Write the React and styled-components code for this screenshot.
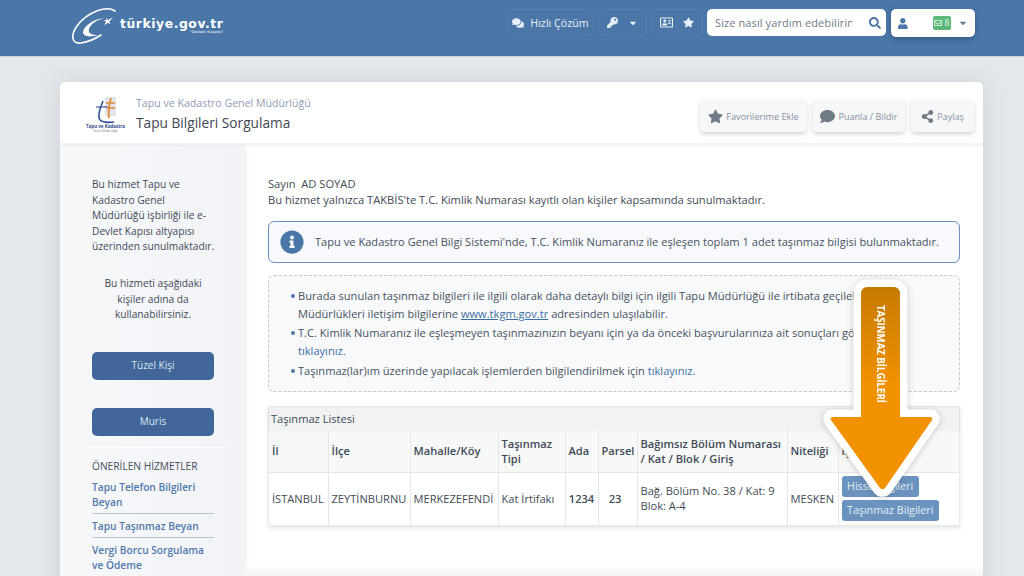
import React from "react";
import styled, { createGlobalStyle } from "styled-components";
import { FaComments, FaKey, FaCaretDown, FaRegAddressCard, FaStar, FaSearch, FaUser, FaRegEnvelope, FaComment, FaShareAlt, FaInfoCircle } from "react-icons/fa";

const Global = createGlobalStyle`
  html, body { margin: 0; height: 576px; overflow: hidden; background: #e4e8ec; }
  body { font-family: "Open Sans", "Liberation Sans", sans-serif; color: #3f4a55; }
  * { box-sizing: border-box; }
`;
const Page = styled.div`width: 1024px; height: 576px; overflow: hidden; display: flex; flex-direction: column;`;
const TopBar = styled.header`
  height: 57px; flex: none; background: #4a76a8; border-bottom: 1px solid #c5d3e2;
  display: flex; align-items: flex-start; padding: 9px 49px 0 71px;
`;
const Logo = styled.div`display: flex; align-items: center; width: 436px; height: 36px; margin-top: -2px;`;
const LogoWord = styled.div`
  display: flex; flex-direction: column; align-items: flex-end; margin: 2px 0 0 1px; color: #fff;
  font-family: "DejaVu Sans", sans-serif; font-weight: 700; font-size: 12.4px; line-height: 12px; letter-spacing: .55px;
  small { font-size: 3.5px; line-height: 4px; font-weight: 400; letter-spacing: 0; }
`;
const NavTools = styled.div`display: flex; align-items: flex-start; gap: 4px;`;
const NavBtn = styled.div`
  height: 27px; width: ${p => p.$w}px; border: 1px solid #527eae; border-radius: 6px; color: #e9eff6;
  display: flex; align-items: center; justify-content: center; gap: ${p => p.$gap || 6}px; font-size: 10.7px;
`;
const Search = styled.div`
  width: 179px; height: 27px; background: #fff; border-radius: 5px; color: #6f7a86;
  display: flex; align-items: center; justify-content: space-between; padding: 0 5px 0 8px; font-size: 11px; letter-spacing: .1px;
  span { width: 137px; overflow: hidden; white-space: nowrap; }
  svg { color: #4a76a8; }
`;
const UserBox = styled.div`
  width: 84px; height: 28px; margin-left: 1px; background: #fff; border-radius: 5px; box-shadow: 0 2px 5px rgba(20,40,70,.35);
  display: flex; align-items: center; padding: 0 7px 0 7px; color: #4a76a8;
`;
const Badge = styled.span`
  margin-left: 25px; width: 21px; height: 14px; background: #5cb878; border-radius: 2px; color: #e8f7ec;
  display: flex; align-items: center; justify-content: center; gap: 2px; font-size: 8.5px; line-height: 14px;
`;
const Caret = styled(FaCaretDown)`margin-left: 7px; color: #6b7a8a; flex: none;`;
const Content = styled.main`flex: 1; padding: 25px 41px 0 60px; min-height: 0;`;
const Card = styled.section`
  position: relative; height: 600px; background: #fff; border-radius: 5px 5px 0 0; box-shadow: 0 0 22px rgba(120,130,145,.22);
`;
const CardHead = styled.div`
  height: 64px; display: flex; align-items: center; padding: 0 9px 0 24px; border-bottom: 3px solid #f2f4f6;
`;
const Agency = styled.div`width: 43px; flex: none; display: flex; flex-direction: column; align-items: center; margin-top: 4px;`;
const AgencyName = styled.span`font-size: 4.5px; font-weight: 700; color: #2f4a86; white-space: nowrap; line-height: 5px;`;
const AgencySub = styled.span`font-size: 3px; color: #778; line-height: 4px; white-space: nowrap;`;
const Titles = styled.div`flex: 1; margin: 2px 0 0 9px;`;
const Org = styled.div`font-size: 10.6px; line-height: 16px; color: #8f9db5;`;
const Title = styled.h1`margin: 2px 0 0; font-size: 13.7px; line-height: 20px; font-weight: 400; color: #3e4650;`;
const Actions = styled.div`display: flex; gap: 6px; margin-top: 7px;`;
const Action = styled.div`
  height: 32px; width: ${p => p.$w}px; background: #f6f7f9; border-radius: 4px; box-shadow: 0 2px 4px rgba(90,100,115,.28);
  display: flex; align-items: center; justify-content: center; gap: 3px; color: #88929c; font-size: 9.1px;
  svg { color: #707b86; flex: none; }
`;
const Body = styled.div`display: grid; grid-template-columns: 185px 1fr; height: 540px;`;
const Side = styled.aside`
  background: linear-gradient(to right, #f7f8fa, #f1f3f7); box-shadow: 1px 0 4px rgba(120,130,145,.14);
  padding: 31px 29px 0 32px; font-size: 10.2px; line-height: 15.6px; color: #3f4a55;
`;
const SideNote = styled.p`margin: 0 0 ${p => p.$mb || 0}px; text-align: ${p => p.$center ? "center" : "left"}; padding-right: ${p => p.$center ? 2 : 0}px;`;
const SideBtn = styled.div`
  height: 28px; width: 122px; border-radius: 5px; background: #41669a; color: #dfe7f1; font-size: 10px;
  display: flex; align-items: center; justify-content: center; margin-bottom: 28px;
`;
const Divider = styled.div`height: 1px; background: #fff; margin: -17px -9px 10px;`;
const SideTitle = styled.div`font-size: 10.2px; line-height: 16px; color: #444f5a; margin-bottom: 6px;`;
const SideLink = styled.a`
  display: block; width: 122px; font-weight: 600; font-size: 10.2px; line-height: 15.4px; color: #4f79aa; padding-bottom: 2.5px;
  border-bottom: 1.5px solid #b5c5d8; margin-bottom: 5px;
`;
const Main = styled.div`
  position: relative; padding: 30px 23px 0 23px; font-size: 11.15px; color: #3f4a55;
  &::after { content: ""; position: absolute; left: 0; right: 0; top: 418px; height: 12px; background: linear-gradient(to bottom, rgba(243,245,247,0), #f3f5f7); }
`;
const Intro = styled.p`margin: 0; line-height: 16px;`;
const Alert = styled.div`
  height: 42px; margin: 13px 0 12px; border: 1px solid #6a90bd; border-radius: 6px; background: #f7f9fc;
  display: flex; align-items: center; padding: 0 11px 2px; gap: 11px; font-size: 11.1px; color: #47525e;
  svg { color: #4a76a8; flex: none; margin-top: 2px; }
`;
const Notes = styled.ul`
  list-style: none; margin: 0 0 14px; height: 117px; padding: 11px 10px 0 29px; border: 1px dashed #c3c8ce; border-radius: 6px; background: #f8f9fb;
  overflow: hidden; font-size: 11.1px; line-height: 17.6px; color: #47525e;
`;
const Note = styled.li`
  position: relative; margin-bottom: 2.2px; white-space: nowrap;
  &::before { content: ""; position: absolute; left: -7px; top: 7px; width: 4px; height: 4px; border-radius: 50%; background: #4a76a8; }
`;
const LinkU = styled.a`color: #3c6ea5; text-decoration: underline;`;
const LinkP = styled.a`color: #3c6ea5;`;
const Panel = styled.div`border: 1px solid #e8e9eb; box-shadow: 0 2px 4px rgba(120,130,145,.22);`;
const PanelTitle = styled.div`height: 24px; background: #f1f2f3; padding: 0 2px 2px; display: flex; align-items: center; font-size: 11.1px; box-shadow: 0 1px 2px rgba(100,110,120,.25);`;
const Table = styled.table`width: 100%; table-layout: fixed; border-collapse: collapse; font-size: 11.1px; color: #3f4a55;`;
const Th = styled.th`
  width: ${p => p.$w ? p.$w + "px" : "auto"}; height: 41px; padding: 0 3px 1px; text-align: left; font-weight: 600; line-height: 15px;
  background: #f7f8f8; border-right: 1px solid #e5e6e8; border-bottom: 1px solid #e5e6e8;
  &:last-child { border-right: 0; }
`;
const Td = styled.td`
  height: 53px; padding: 0 ${p => p.$pr || 3}px 1px 3px; line-height: 15px; border-right: 1px solid #e5e6e8; font-weight: ${p => p.$bold ? 600 : 400}; text-align: ${p => p.$center ? "center" : "left"};
  white-space: ${p => p.$wrap ? "normal" : "nowrap"};
  &:last-child { border-right: 0; }
`;
const RowBtn = styled.div`
  width: fit-content; height: 21px; line-height: 21px; padding: 0 5.5px; background: #6a93bf; color: #e8eff7; border-radius: 3px; font-size: 10.7px; margin-bottom: 3px;
  &:last-child { margin-bottom: 0; }
`;
const ArrowSvg = styled.svg`position: absolute; right: 43px; top: 132px; z-index: 1; filter: drop-shadow(0 1px 3px rgba(60,60,60,.25));`;

const Crescent = () => (
  <svg width="48" height="38" viewBox="0 0 48 38" fill="none">
    <path d="M44 5C36-1 16 6 6 20-1 30 1 38 10 37c7-1 14-4 20-8" stroke="#fff" strokeWidth="1.6" strokeLinecap="round" />
    <path d="M33 12C22 13 13 20 12 26c0 4 6 6 15 3-7 0-10-2-9-6 1-4 7-9 15-11z" fill="#fff" />
    <path d="M35 11l1.6 3 5.4-2.4-3.8 4 1.4 2.6-2.8-1.4-3.4 2.4 1.6-3.6-2.4-1.4 3-.2z" fill="#fff" />
  </svg>
);
const AgencyMark = () => (
  <svg width="24" height="28" viewBox="0 0 24 28" fill="none">
    <path d="M11 1h11v19H11z" fill="#e3e4e8" />
    <path d="M17 2C15 9 14 15 15 22" stroke="#e08a3a" strokeWidth="1.8" />
    <path d="M9 5C6 12 3 20 6 24c2 2 8 3 14 2" stroke="#2f4a96" strokeWidth="1.6" />
    <path d="M2 11h12" stroke="#2f4a96" strokeWidth="1.1" />
    <path d="M12 7h9M13 12h8" stroke="#e08a3a" strokeWidth="1.3" />
  </svg>
);
const Arrow = () => (
  <ArrowSvg width="120" height="222" viewBox="0 0 120 222">
    <defs>
      <linearGradient id="ag" x1="0" y1="0" x2="0" y2="1">
        <stop offset="0" stopColor="#c67a02" />
        <stop offset=".5" stopColor="#f29200" />
        <stop offset="1" stopColor="#f39200" />
      </linearGradient>
    </defs>
    <path d="M47 9h27a6 6 0 0 1 6 6v124h30a2 2 0 0 1 2 3l-47 68a3 3 0 0 1-5 0L11 142a2 2 0 0 1 2-3h28V15a6 6 0 0 1 6-6z"
      fill="url(#ag)" stroke="#fff" strokeWidth="15" strokeLinejoin="round" paintOrder="stroke" />
    <text x="0" y="0" transform="translate(56.5 27) rotate(90)" fill="#fff" fontSize="10" fontWeight="700" textLength="98" lengthAdjust="spacingAndGlyphs" fontFamily="Open Sans, sans-serif">TAŞINMAZ BİLGİLERİ</text>
  </ArrowSvg>
);

export default function App() {
  return (
    <Page>
      <Global />
      <TopBar>
        <Logo>
          <Crescent />
          <LogoWord>türkiye.gov.tr<small>"Devletin Kısayolu"</small></LogoWord>
        </Logo>
        <NavTools>
          <NavBtn $w={87}><FaComments size={12} />Hızlı Çözüm</NavBtn>
          <NavBtn $w={49} $gap={10}><FaKey size={11} /><FaCaretDown size={10} /></NavBtn>
          <NavBtn $w={52} $gap={10}><FaRegAddressCard size={13} /><FaStar size={11} /></NavBtn>
          <Search><span>Size nasıl yardım edebilirim?</span><FaSearch size={12} /></Search>
          <UserBox><FaUser size={11} /><Badge><FaRegEnvelope size={8} />8</Badge><Caret size={10} /></UserBox>
        </NavTools>
      </TopBar>
      <Content>
        <Card>
          <CardHead>
            <Agency>
              <AgencyMark />
              <AgencyName>Tapu ve Kadastro</AgencyName>
              <AgencySub>Genel Müdürlüğü</AgencySub>
            </Agency>
            <Titles>
              <Org>Tapu ve Kadastro Genel Müdürlüğü</Org>
              <Title>Tapu Bilgileri Sorgulama</Title>
            </Titles>
            <Actions>
              <Action $w={107}><FaStar size={15} />Favorilerime Ekle</Action>
              <Action $w={92}><FaComment size={15} />Puanla / Bildir</Action>
              <Action $w={63}><FaShareAlt size={13} />Paylaş</Action>
            </Actions>
          </CardHead>
          <Body>
            <Side>
              <SideNote $mb={21}>Bu hizmet Tapu ve Kadastro Genel Müdürlüğü işbirliği ile e-Devlet Kapısı altyapısı üzerinden sunulmaktadır.</SideNote>
              <SideNote $center $mb={29}>Bu hizmeti aşağıdaki kişiler adına da kullanabilirsiniz.</SideNote>
              <SideBtn>Tüzel Kişi</SideBtn>
              <SideBtn>Muris</SideBtn>
              <Divider />
              <SideTitle>ÖNERİLEN HİZMETLER</SideTitle>
              <SideLink>Tapu Telefon Bilgileri Beyan</SideLink>
              <SideLink>Tapu Taşınmaz Beyan</SideLink>
              <SideLink>Vergi Borcu Sorgulama ve Ödeme</SideLink>
            </Side>
            <Main>
              <Intro>Sayın&nbsp; AD SOYAD</Intro>
              <Intro>Bu hizmet yalnızca TAKBİS'te T.C. Kimlik Numarası kayıtlı olan kişiler kapsamında sunulmaktadır.</Intro>
              <Alert><FaInfoCircle size={24} />Tapu ve Kadastro Genel Bilgi Sistemi'nde, T.C. Kimlik Numaranız ile eşleşen toplam 1 adet taşınmaz bilgisi bulunmaktadır.</Alert>
              <Notes>
                <Note>Burada sunulan taşınmaz bilgileri ile ilgili olarak daha detaylı bilgi için ilgili Tapu Müdürlüğü ile irtibata geçilebilir.<br />Müdürlükleri iletişim bilgilerine <LinkU>www.tkgm.gov.tr</LinkU> adresinden ulaşılabilir.</Note>
                <Note>T.C. Kimlik Numaranız ile eşleşmeyen taşınmazınızın beyanı için ya da önceki başvurularınıza ait sonuçları görmek için<br /><LinkP>tıklayınız.</LinkP></Note>
                <Note>Taşınmaz(lar)ım üzerinde yapılacak işlemlerden bilgilendirilmek için <LinkP>tıklayınız.</LinkP></Note>
              </Notes>
              <Panel>
                <PanelTitle>Taşınmaz Listesi</PanelTitle>
                <Table>
                  <thead>
                    <tr>
                      <Th $w={59}>İl</Th>
                      <Th $w={82}>İlçe</Th>
                      <Th $w={88}>Mahalle/Köy</Th>
                      <Th $w={67}>Taşınmaz Tipi</Th>
                      <Th $w={33}>Ada</Th>
                      <Th $w={39}>Parsel</Th>
                      <Th $w={150}>Bağımsız Bölüm Numarası / Kat / Blok / Giriş</Th>
                      <Th $w={51}>Niteliği</Th>
                      <Th>İşlem</Th>
                    </tr>
                  </thead>
                  <tbody>
                    <tr>
                      <Td>İSTANBUL</Td>
                      <Td>ZEYTİNBURNU</Td>
                      <Td>MERKEZEFENDİ</Td>
                      <Td>Kat İrtifakı</Td>
                      <Td $bold $center>1234</Td>
                      <Td $bold $center $pr={8}>23</Td>
                      <Td $wrap>Bağ. Bölüm No. 38 / Kat: 9 Blok: A-4</Td>
                      <Td>MESKEN</Td>
                      <Td><RowBtn>Hisse Bilgileri</RowBtn><RowBtn>Taşınmaz Bilgileri</RowBtn></Td>
                    </tr>
                  </tbody>
                </Table>
              </Panel>
              <Arrow />
            </Main>
          </Body>
        </Card>
      </Content>
    </Page>
  );
}
